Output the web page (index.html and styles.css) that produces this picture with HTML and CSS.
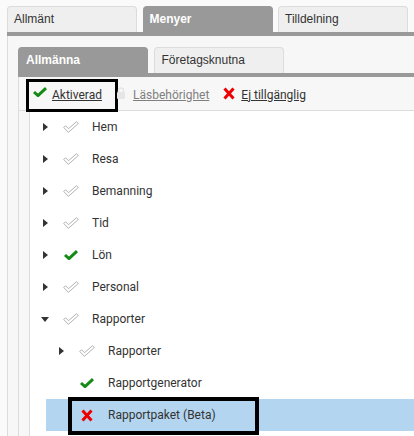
FILE: index.html
```html
<!DOCTYPE html>
<html lang="sv">
<head>
<meta charset="utf-8">
<title>Menyer</title>
<link rel="stylesheet" href="styles.css">
</head>
<body>
<div class="outer">
  <div class="tabs">
    <div class="tab">Allmänt</div>
    <div class="tab active">Menyer</div>
    <div class="tab">Tilldelning</div>
    <div class="tab"></div>
  </div>
  <div class="panel">
    <div class="tabs inner-tabs">
      <div class="tab active">Allmänna</div>
      <div class="tab">Företagsknutna</div>
    </div>
    <div class="subpanel">
      <div class="toolbar">
        <a class="tool marked">
          <svg class="ico-check" width="14" height="10" viewBox="0 0 14 10"><polyline points="1,5 5,8.6 13,1.2" fill="none" stroke="#138a13" stroke-width="3"/></svg>
          <span class="lnk">Aktiverad</span>
        </a>
        <a class="tool disabled">
          <svg class="ico-lock" width="10" height="12" viewBox="0 0 10 12"><path d="M2.5 5 V3.5 a2.5 2.5 0 0 1 5 0 V5" fill="none" stroke="#e6e6e6" stroke-width="1.5"/><rect x="1" y="5" width="8" height="7" rx="1" fill="#e6e6e6"/></svg>
          <span class="lnk">Läsbehörighet</span>
        </a>
        <a class="tool">
          <svg class="ico-x" width="12" height="13" viewBox="0 0 12 13"><path d="M1.5 1.5 L10.5 11.5 M10.5 1.5 L1.5 11.5" stroke="#ee0000" stroke-width="3"/></svg>
          <span class="lnk">Ej tillgänglig</span>
        </a>
      </div>
      <div class="tree">
        <div class="row"><span class="toggle closed"></span><span class="icon"><svg width="16" height="12" viewBox="0 0 16 12"><polygon points="0.7,6.5 2.5,4.7 5.5,7.7 13.5,0.7 15.3,2.5 5.5,11.3" fill="#fff" stroke="#aaa" stroke-width="0.9"/></svg></span><span class="label">Hem</span></div>
        <div class="row"><span class="toggle closed"></span><span class="icon"><svg width="16" height="12" viewBox="0 0 16 12"><polygon points="0.7,6.5 2.5,4.7 5.5,7.7 13.5,0.7 15.3,2.5 5.5,11.3" fill="#fff" stroke="#aaa" stroke-width="0.9"/></svg></span><span class="label">Resa</span></div>
        <div class="row"><span class="toggle closed"></span><span class="icon"><svg width="16" height="12" viewBox="0 0 16 12"><polygon points="0.7,6.5 2.5,4.7 5.5,7.7 13.5,0.7 15.3,2.5 5.5,11.3" fill="#fff" stroke="#aaa" stroke-width="0.9"/></svg></span><span class="label">Bemanning</span></div>
        <div class="row"><span class="toggle closed"></span><span class="icon"><svg width="16" height="12" viewBox="0 0 16 12"><polygon points="0.7,6.5 2.5,4.7 5.5,7.7 13.5,0.7 15.3,2.5 5.5,11.3" fill="#fff" stroke="#aaa" stroke-width="0.9"/></svg></span><span class="label">Tid</span></div>
        <div class="row"><span class="toggle closed"></span><span class="icon"><svg width="14" height="10" viewBox="0 0 14 10"><polyline points="1,5 5,8.6 13,1.2" fill="none" stroke="#138a13" stroke-width="3"/></svg></span><span class="label">Lön</span></div>
        <div class="row"><span class="toggle closed"></span><span class="icon"><svg width="16" height="12" viewBox="0 0 16 12"><polygon points="0.7,6.5 2.5,4.7 5.5,7.7 13.5,0.7 15.3,2.5 5.5,11.3" fill="#fff" stroke="#aaa" stroke-width="0.9"/></svg></span><span class="label">Personal</span></div>
        <div class="row"><span class="toggle open"></span><span class="icon"><svg width="16" height="12" viewBox="0 0 16 12"><polygon points="0.7,6.5 2.5,4.7 5.5,7.7 13.5,0.7 15.3,2.5 5.5,11.3" fill="#fff" stroke="#aaa" stroke-width="0.9"/></svg></span><span class="label">Rapporter</span></div>
        <div class="children">
          <div class="row"><span class="toggle closed"></span><span class="icon"><svg width="16" height="12" viewBox="0 0 16 12"><polygon points="0.7,6.5 2.5,4.7 5.5,7.7 13.5,0.7 15.3,2.5 5.5,11.3" fill="#fff" stroke="#aaa" stroke-width="0.9"/></svg></span><span class="label">Rapporter</span></div>
          <div class="row"><span class="toggle"></span><span class="icon"><svg width="14" height="10" viewBox="0 0 14 10"><polyline points="1,5 5,8.6 13,1.2" fill="none" stroke="#138a13" stroke-width="3"/></svg></span><span class="label">Rapportgenerator</span></div>
          <div class="row selected"><span class="toggle"></span><span class="icon"><svg width="12" height="13" viewBox="0 0 12 13"><path d="M1.5 1.5 L10.5 11.5 M10.5 1.5 L1.5 11.5" stroke="#ee0000" stroke-width="3"/></svg></span><span class="label">Rapportpaket (Beta)</span></div>
        </div>
      </div>
    </div>
  </div>
</div>
</body>
</html>
```

FILE: styles.css
```css
html, body {
  margin: 0;
  padding: 0;
}
body {
  background: #fafafa;
  overflow: hidden;
  height: 436px;
  font-family: "Liberation Sans", Arial, sans-serif;
  color: #333;
}
.outer {
  margin: 6px 0 0 7px;
  width: 407px;
}
.tabs {
  display: flex;
  gap: 5.5px;
  border-bottom: 4px solid #999;
  overflow: hidden;
}
.tab {
  box-sizing: border-box;
  flex-shrink: 0;
  width: 130px;
  height: 26px;
  line-height: 24px;
  padding-left: 6px;
  font-size: 12px;
  color: #333;
  background: #efefef;
  border: 1px solid #dcdcdc;
  border-bottom: none;
  border-radius: 4px 4px 0 0;
}
.tab.active {
  background: #999;
  border-color: #999;
  color: #fff;
  font-weight: bold;
}
.inner-tabs .tab {
  padding-left: 7px;
}
.panel {
  box-sizing: border-box;
  background: #f7f7f7;
  border-left: 1px solid #dcdcdc;
  padding: 11px 0 0 10px;
  height: 400px;
}
.subpanel {
  border-left: 1px solid #dcdcdc;
  height: 359px;
}
.toolbar {
  display: flex;
  align-items: stretch;
  height: 33px;
  padding-left: 14px;
  gap: 14px;
  border-bottom: 1px solid #dcdcdc;
  font-family: Roboto, "Liberation Sans", sans-serif;
  font-size: 12px;
}
.tool {
  position: relative;
  display: flex;
  align-items: center;
  gap: 5px;
  color: #333;
}
.tool .lnk {
  text-decoration: underline;
  margin-top: 2px;
}
.tool.disabled {
  color: #808080;
  gap: 7px;
}
.tool.disabled + .tool {
  gap: 6px;
}
.tool.marked::after {
  content: "";
  position: absolute;
  left: -7px;
  right: -16px;
  top: 2px;
  bottom: -2px;
  border: 3px solid #000;
}
.ico-check {
  margin-top: -3px;
}
.ico-lock {
  margin-top: -2px;
}
.tree {
  margin-left: 10px;
  border-left: 1px solid #dcdcdc;
  background: #fff;
  height: 325px;
  font-family: Roboto, "Liberation Sans", sans-serif;
  font-size: 12px;
  color: #333;
}
.row {
  position: relative;
  display: flex;
  align-items: center;
  height: 32px;
  padding-left: 10px;
}
.toggle {
  width: 10px;
  height: 10px;
  display: flex;
  align-items: center;
  justify-content: center;
}
.toggle.closed::before {
  content: "";
  width: 0;
  height: 0;
  border-top: 4px solid transparent;
  border-bottom: 4px solid transparent;
  border-left: 5px solid #333;
}
.toggle.open::before {
  content: "";
  width: 0;
  height: 0;
  border-left: 4px solid transparent;
  border-right: 4px solid transparent;
  border-top: 5px solid #333;
}
.icon {
  width: 16px;
  margin-left: 13px;
  display: flex;
  align-items: center;
  justify-content: center;
}
.label {
  margin-left: 13px;
}
.children {
  margin-left: 16px;
}
.row.selected {
  background: #b3d5ef;
}
.row.selected::after {
  content: "";
  position: absolute;
  left: 22px;
  top: -2px;
  width: 191px;
  height: 38px;
  box-sizing: border-box;
  border: 4px solid #000;
}
```
